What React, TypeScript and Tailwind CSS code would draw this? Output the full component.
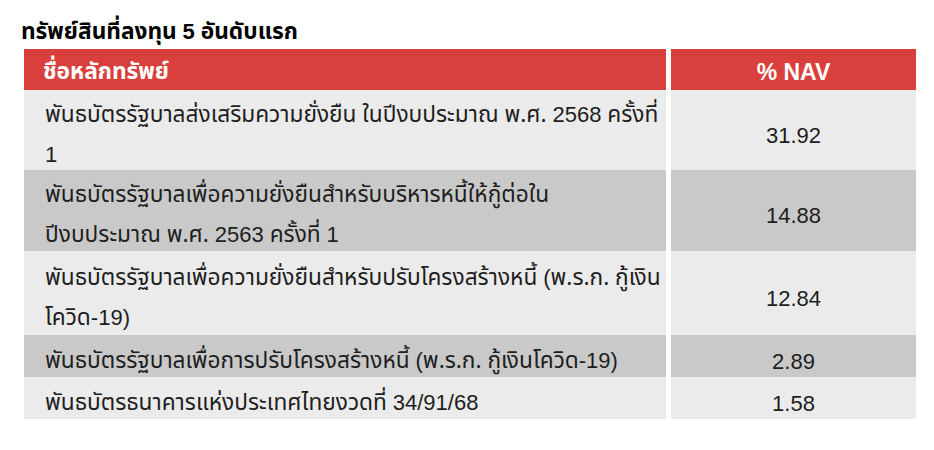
import React from "react";

const THAI = '"Noto Sans Thai", Tahoma, "Noto Sans", sans-serif';
const LATIN = '"Liberation Sans", Arial, sans-serif';

function Mixed({ text, latinClass }: { text: string; latinClass: string }) {
  const parts = text.split(/([0-9A-Za-z%\/\-\(\)]+(?:[ .\/\-\(\)0-9]*[0-9\)])?)/);
  return (
    <>
      {parts.map((p, i) =>
        i % 2 === 1 ? (
          <span key={i} className={latinClass} style={{ fontFamily: LATIN }}>
            {p}
          </span>
        ) : (
          <span key={i}>{p}</span>
        )
      )}
    </>
  );
}

const rows: { lines: string[]; nav: string; dark: boolean; h: string }[] = [
  {
    lines: ["พันธบัตรรัฐบาลส่งเสริมความยั่งยืน ในปีงบประมาณ พ.ศ. 2568 ครั้งที่", "1"],
    nav: "31.92",
    dark: false,
    h: "h-[80px]",
  },
  {
    lines: ["พันธบัตรรัฐบาลเพื่อความยั่งยืนสำหรับบริหารหนี้ให้กู้ต่อใน", "ปีงบประมาณ พ.ศ. 2563 ครั้งที่ 1"],
    nav: "14.88",
    dark: true,
    h: "h-[81px]",
  },
  {
    lines: ["พันธบัตรรัฐบาลเพื่อความยั่งยืนสำหรับปรับโครงสร้างหนี้ (พ.ร.ก. กู้เงิน", "โควิด-19)"],
    nav: "12.84",
    dark: false,
    h: "h-[84px]",
  },
  {
    lines: ["พันธบัตรรัฐบาลเพื่อการปรับโครงสร้างหนี้ (พ.ร.ก. กู้เงินโควิด-19)"],
    nav: "2.89",
    dark: true,
    h: "h-[42px]",
  },
  {
    lines: ["พันธบัตรธนาคารแห่งประเทศไทยงวดที่ 34/91/68"],
    nav: "1.58",
    dark: false,
    h: "h-[42px]",
  },
];

export default function App() {
  return (
    <div className="w-[934px] h-[450px] bg-white text-[#1e1e1e] overflow-hidden" style={{ fontFamily: THAI }}>
      <div className="pt-[18px] pl-[21px] h-[49px]">
        <div className="text-[22.7px] font-bold leading-[28px] text-black">
          <Mixed text="ทรัพย์สินที่ลงทุน 5 อันดับแรก" latinClass="text-[22px]" />
        </div>
      </div>
      <div className="ml-[24px] w-[892px]">
        <div className="flex h-[41px] bg-[#d9403d] text-white font-bold text-[22.7px] pt-[5px]">
          <div className="w-[642px] flex items-center pl-[19px]">ชื่อหลักทรัพย์</div>
          <div className="w-[5px] bg-white -mt-[5px]" />
          <div className="flex-1 flex items-center justify-center text-[23px]" style={{ fontFamily: LATIN }}>
            % NAV
          </div>
        </div>
        {rows.map((r, i) => (
          <div key={i} className={`flex ${r.h} ${r.dark ? "bg-[#c9c9c9]" : "bg-[#ebebeb]"} text-[22.7px]`}>
            <div className="w-[642px] flex flex-col justify-center pl-[21px] pt-[9px] leading-[40px] whitespace-nowrap">
              {r.lines.map((l, j) => (
                <div key={j}>
                  <Mixed text={l} latinClass="text-[22px]" />
                </div>
              ))}
            </div>
            <div className="w-[5px] bg-white" />
            <div
              className="flex-1 flex items-center justify-center pt-[10px] text-[22px]"
              style={{ fontFamily: LATIN }}
            >
              {r.nav}
            </div>
          </div>
        ))}
      </div>
    </div>
  );
}
